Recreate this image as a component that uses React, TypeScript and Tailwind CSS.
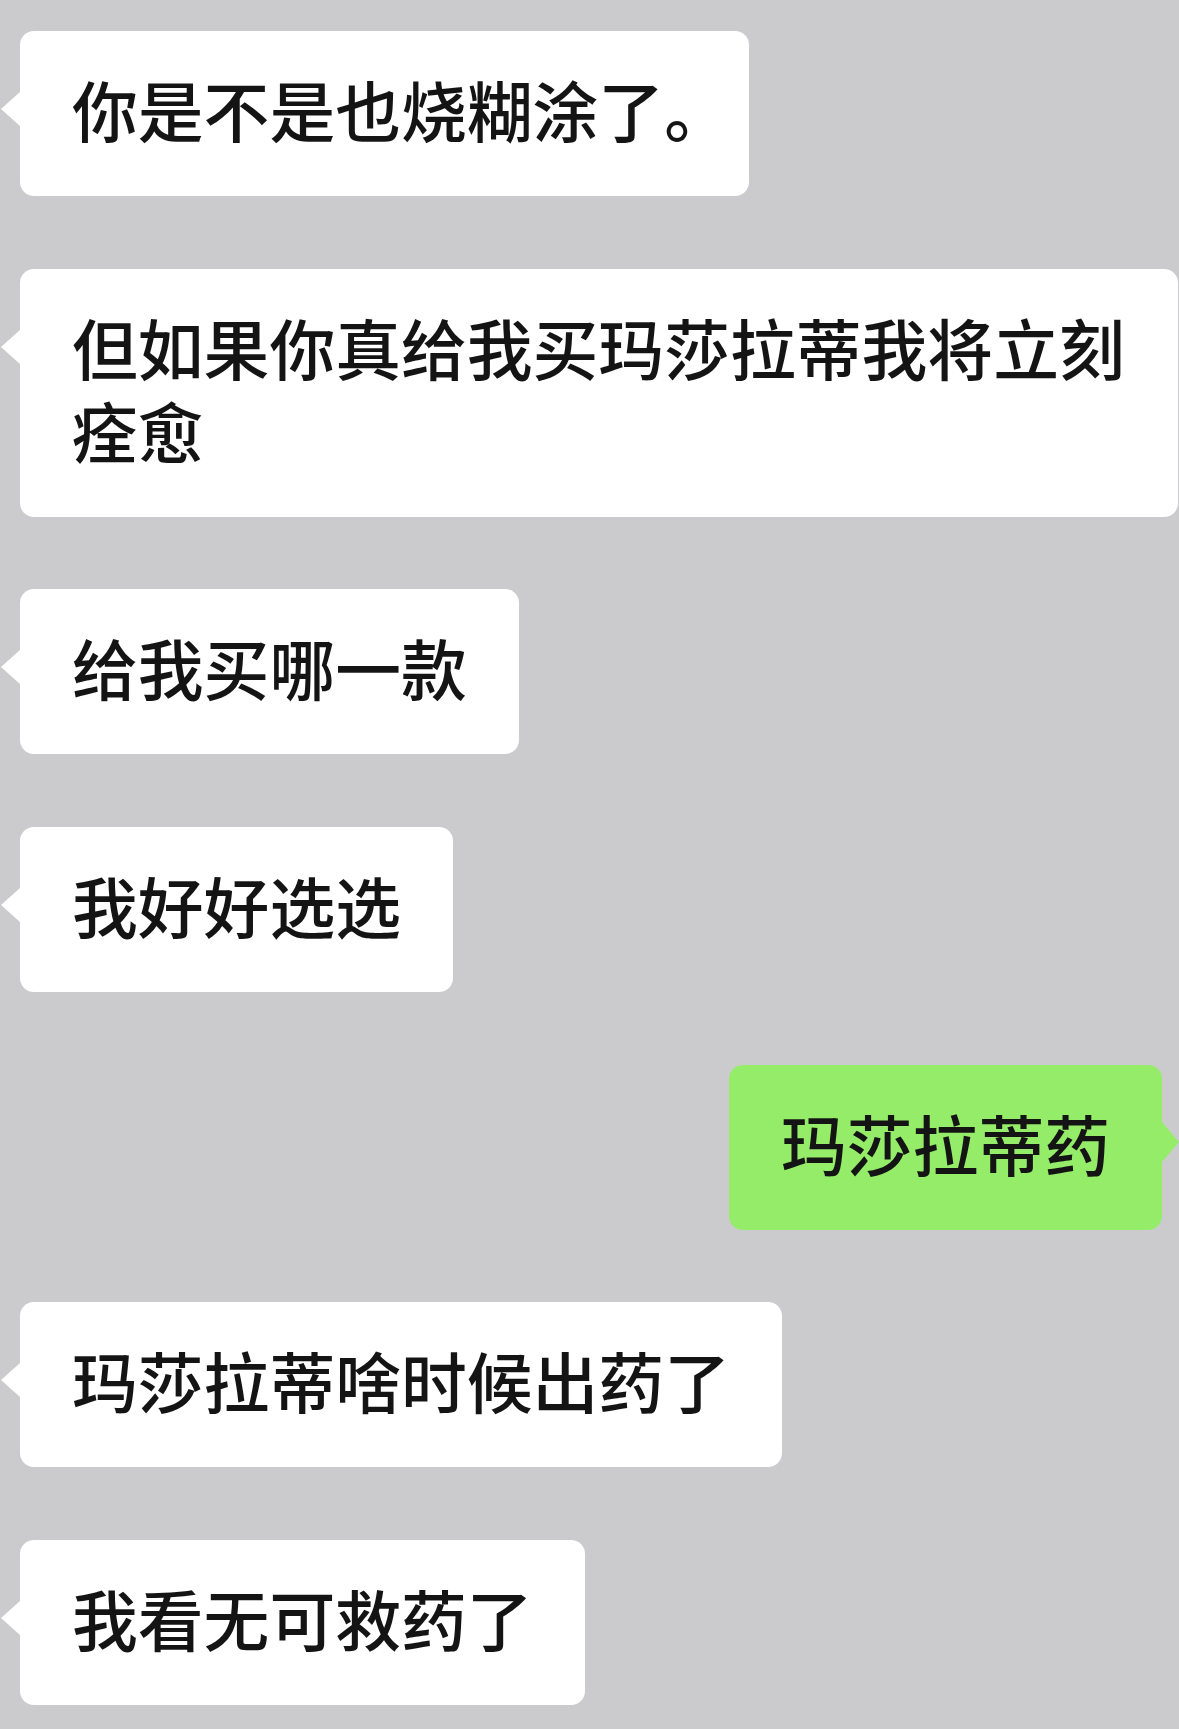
import React from 'react';

type Msg = { text: React.ReactNode; mine?: boolean };

const messages: Msg[] = [
  {
    text: (
      <>
        你是不是也烧糊涂了<span className="tracking-[-0.5em]">。</span>
      </>
    ),
  },
  { text: '但如果你真给我买玛莎拉蒂我将立刻痊愈' },
  { text: '给我买哪一款' },
  { text: '我好好选选' },
  { text: '玛莎拉蒂药', mine: true },
  { text: '玛莎拉蒂啥时候出药了' },
  { text: '我看无可救药了' },
];

const Bubble: React.FC<{ msg: Msg }> = ({ msg }) => {
  if (msg.mine) {
    return (
      <div className="self-end mr-[17px] relative w-fit max-w-[1140px] rounded-[14px] bg-[#95ec69] px-[52px] pt-[36px] pb-[46px]">
        <span className="absolute right-[-17px] top-[57px] w-0 h-0 border-y-[20px] border-y-transparent border-l-[17px] border-l-[#95ec69]" />
        {msg.text}
      </div>
    );
  }
  return (
    <div className="self-start ml-[20px] relative w-fit max-w-[1158px] rounded-[14px] bg-white px-[52px] pt-[36px] pb-[46px]">
      <span className="absolute left-[-19px] top-[61px] w-0 h-0 border-y-[17px] border-y-transparent border-r-[19px] border-r-white" />
      {msg.text}
    </div>
  );
};

const App: React.FC = () => {
  return (
    <div
      className="min-h-[1729px] w-full overflow-hidden bg-[#cbcbcd] pt-[31px] pb-[23px] flex flex-col gap-[72.7px] text-[65.8px] leading-[83px] font-medium text-[#141414]"
      style={{ fontFamily: '"Noto Sans CJK SC", "Noto Sans", sans-serif' }}
    >
      {messages.map((m, i) => (
        <Bubble key={i} msg={m} />
      ))}
    </div>
  );
};

export default App;
